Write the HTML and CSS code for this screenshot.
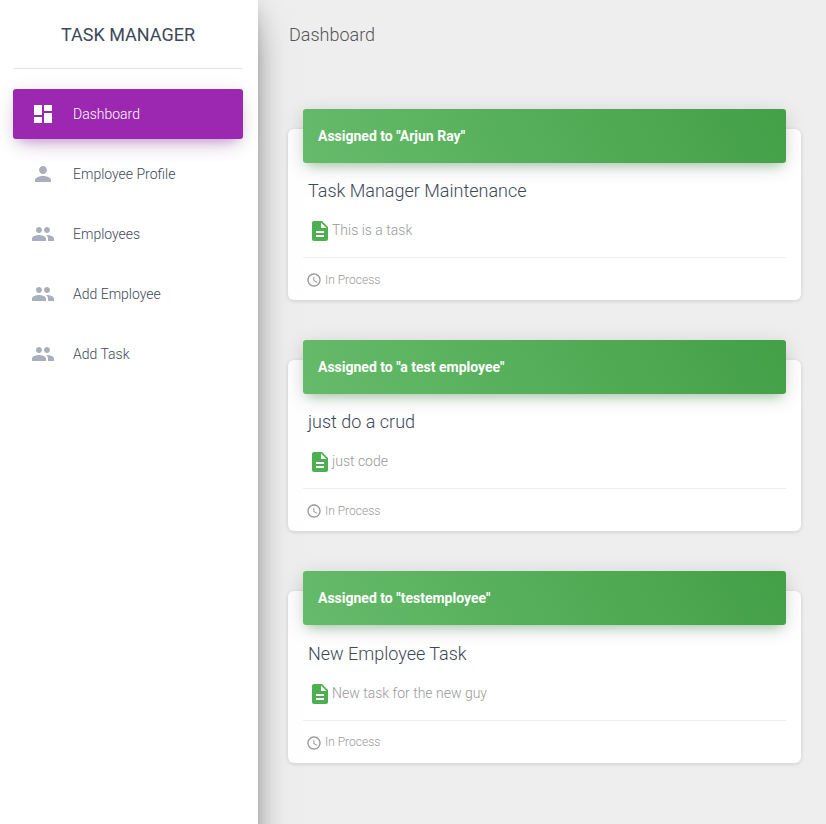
FILE: index.html
```html
<!DOCTYPE html>
<html lang="en">
<head>
<meta charset="utf-8">
<title>Task Manager</title>
<link rel="stylesheet" href="styles.css">
</head>
<body>
<svg class="sprite" aria-hidden="true">
  <symbol id="grid" viewBox="0 0 24 24"><path d="M3 13h8V3H3v10zm0 8h8v-6H3v6zm10 0h8V11h-8v10zm0-18v6h8V3h-8z"/></symbol>
  <symbol id="person" viewBox="0 0 24 24"><path d="M12 12c2.21 0 4-1.79 4-4s-1.79-4-4-4-4 1.790-4 4 1.790 4 4 4zm0 2c-2.670 0-8 1.340-8 4v2h16v-2c0-2.660-5.330-4-8-4z"/></symbol>
  <symbol id="people" viewBox="0 0 24 24"><path d="M16 11c1.660 0 2.990-1.340 2.990-3S17.660 5 16 5s-3 1.340-3 3 1.340 3 3 3zm-8 0c1.660 0 2.990-1.340 2.990-3S9.660 5 8 5 5 6.340 5 8s1.340 3 3 3zm0 2c-2.330 0-7 1.170-7 3.500V19h14v-2.500c0-2.330-4.670-3.500-7-3.500zm8 0c-.29 0-.62.020-.97.050 1.160.84 1.970 1.970 1.970 3.450V19h6v-2.500c0-2.330-4.670-3.500-7-3.500z"/></symbol>
  <symbol id="file" viewBox="0 0 24 24"><path d="M14 2H6c-1.100 0-1.990.9-1.990 2L4 20c0 1.100.89 2 1.990 2H18c1.100 0 2-.9 2-2V8l-6-6zm2 16H8v-2h8v2zm0-4H8v-2h8v2zm-3-5V3.500L18.500 9H13z"/></symbol>
  <symbol id="clock" viewBox="0 0 24 24"><path d="M11.990 2C6.470 2 2 6.480 2 12s4.470 10 9.990 10C17.520 22 22 17.520 22 12S17.520 2 11.990 2zM12 20c-4.420 0-8-3.580-8-8s3.580-8 8-8 8 3.580 8 8-3.580 8-8 8zm.5-13H11v6l5.250 3.150.75-1.230-4.500-2.670z"/></symbol>
</svg>
<div class="page">
  <aside class="sidebar">
    <div class="logo">TASK MANAGER</div>
    <nav class="nav">
      <a class="nav-link active"><svg class="nav-icon"><use href="#grid"/></svg>Dashboard</a>
      <a class="nav-link"><svg class="nav-icon"><use href="#person"/></svg>Employee Profile</a>
      <a class="nav-link"><svg class="nav-icon"><use href="#people"/></svg>Employees</a>
      <a class="nav-link"><svg class="nav-icon"><use href="#people"/></svg>Add Employee</a>
      <a class="nav-link"><svg class="nav-icon"><use href="#people"/></svg>Add Task</a>
    </nav>
  </aside>
  <main class="main">
    <h1 class="title">Dashboard</h1>
    <section class="card">
      <div class="card-header">Assigned to "Arjun Ray"</div>
      <h2 class="task">Task Manager Maintenance</h2>
      <p class="description"><svg class="file-icon"><use href="#file"/></svg>This is a task</p>
      <footer class="status"><svg class="clock-icon"><use href="#clock"/></svg>In Process</footer>
    </section>
    <section class="card">
      <div class="card-header">Assigned to "a test employee"</div>
      <h2 class="task">just do a crud</h2>
      <p class="description"><svg class="file-icon"><use href="#file"/></svg>just code</p>
      <footer class="status"><svg class="clock-icon"><use href="#clock"/></svg>In Process</footer>
    </section>
    <section class="card">
      <div class="card-header">Assigned to "testemployee"</div>
      <h2 class="task">New Employee Task</h2>
      <p class="description"><svg class="file-icon"><use href="#file"/></svg>New task for the new guy</p>
      <footer class="status"><svg class="clock-icon"><use href="#clock"/></svg>In Process</footer>
    </section>
  </main>
</div>
</body>
</html>
```
FILE: styles.css
```css
* { box-sizing: border-box; }
body {
  margin: 0;
  background: #eee;
  color: #3c4858;
  font: 300 14px/20px Roboto, sans-serif;
}
svg { fill: currentColor; flex: none; }
.sprite { display: none; }
.page { display: flex; height: 100vh; overflow: hidden; }
/* The sidebar runs past the fold so its shadow stays even down to the edge. */
.sidebar {
  width: 258px;
  flex: none;
  margin-bottom: -80px;
  padding: 0 15px 0 13px;
  background: #fff;
  position: relative;
  box-shadow: 0 16px 38px -12px rgba(0,0,0,.56), 0 4px 25px 0 rgba(0,0,0,.12), 0 8px 10px -5px rgba(0,0,0,.2);
}
.logo {
  height: 69px;
  border-bottom: 1px solid #e3e3e3;
  font-size: 18px;
  font-weight: 400;
  line-height: 30px;
  padding-top: 20px;
  text-align: center;
}
.nav { display: flex; flex-direction: column; gap: 10px; margin-top: 20px; }
.nav-link {
  display: flex;
  align-items: center;
  height: 50px;
  padding-left: 18px;
  border-radius: 3px;
}
.nav-icon { width: 24px; height: 24px; margin-right: 18px; color: #a9afbb; }
.active {
  color: #fff;
  background: #9c27b0;
  box-shadow: 0 12px 20px -10px rgba(156,39,176,.28), 0 4px 20px 0 rgba(0,0,0,.12), 0 7px 8px -5px rgba(156,39,176,.2);
}
.active .nav-icon { color: #fff; }
.main { flex: 1; padding: 0 25px 0 30px; }
.title {
  margin: 0 0 79px 1px;
  padding-top: 20px;
  font-size: 18px;
  font-weight: 300;
  line-height: 30px;
  color: #555;
}
.card {
  height: 171.2px;
  margin-bottom: 60px;
  padding: 0 15px;
  border-radius: 6px;
  background: #fff;
  box-shadow: 0 1px 4px 0 rgba(0,0,0,.14);
  display: flex;
  flex-direction: column;
}
.card-header {
  height: 54px;
  flex: none;
  margin-top: -20px;
  padding: 17px 15px;
  border-radius: 3px;
  color: #fff;
  font-weight: 700;
  background: linear-gradient(60deg, #66bb6a, #43a047);
  box-shadow: 0 4px 20px 0 rgba(0,0,0,.14), 0 7px 10px -5px rgba(76,175,80,.4);
}
.task {
  margin: 15.2px 5px 0;
  font-size: 18px;
  font-weight: 300;
  line-height: 25px;
}
.description {
  display: flex;
  align-items: center;
  height: 24px;
  margin: 15px 5px 0;
  color: #999;
  line-height: 24px;
}
.file-icon { width: 24px; height: 24px; margin-top: 2px; color: #4caf50; }
.status {
  display: flex;
  align-items: center;
  height: 42px;
  margin-top: 15px;
  padding: 2px 3px 0;
  border-top: 1px solid #eee;
  color: #999;
  font-size: 12px;
}
.clock-icon { width: 16px; height: 16px; margin: 1.1px 3px 0 0; }
```
